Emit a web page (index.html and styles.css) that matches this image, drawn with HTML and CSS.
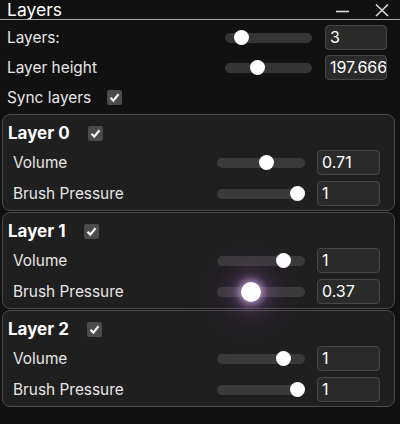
FILE: index.html
```html
<!DOCTYPE html>
<html>
<head>
<meta charset="utf-8">
<link rel="stylesheet" href="styles.css">
</head>
<body>
<div class="window">
  <div class="titlebar">
    <span class="title">Layers</span>
    <span class="tb-icons">
      <svg class="tb-min" width="16" height="16" viewBox="0 0 16 16"><path d="M1 9.5 H14" stroke="#dcdcdc" stroke-width="1.6"/></svg>
      <svg class="tb-close" width="16" height="16" viewBox="0 0 16 16"><path d="M2 2.5 L14 14 M14 2.5 L2 14" stroke="#dcdcdc" stroke-width="1.6"/></svg>
    </span>
  </div>
  <div class="global">
    <div class="row top-row">
      <span class="label">Layers:</span>
      <div class="track"><div class="thumb" style="left:19.5%"></div></div>
      <div class="input">3</div>
    </div>
    <div class="row top-row">
      <span class="label">Layer height</span>
      <div class="track"><div class="thumb" style="left:36.8%"></div></div>
      <div class="input">197.666</div>
    </div>
    <div class="row check-row">
      <span class="label">Sync layers</span>
      <span class="check"><svg width="15" height="15" viewBox="0 0 15 15"><path d="M3.5 7.8 L6.3 10.6 L11.5 4.2" fill="none" stroke="#fff" stroke-width="2.2"/></svg></span>
    </div>
  </div>
  <div class="cards">
    <div class="card">
      <div class="card-title"><span class="name">Layer 0</span><span class="check"><svg width="15" height="15" viewBox="0 0 15 15"><path d="M3.5 7.8 L6.3 10.6 L11.5 4.2" fill="none" stroke="#fff" stroke-width="2.2"/></svg></span></div>
      <div class="row card-row">
        <span class="label">Volume</span>
        <div class="track"><div class="thumb" style="left:56%"></div></div>
        <div class="input">0.71</div>
      </div>
      <div class="row card-row">
        <span class="label">Brush Pressure</span>
        <div class="track"><div class="thumb" style="left:91%"></div></div>
        <div class="input">1</div>
      </div>
    </div>
    <div class="card">
      <div class="card-title"><span class="name">Layer 1</span><span class="check"><svg width="15" height="15" viewBox="0 0 15 15"><path d="M3.5 7.8 L6.3 10.6 L11.5 4.2" fill="none" stroke="#fff" stroke-width="2.2"/></svg></span></div>
      <div class="row card-row">
        <span class="label">Volume</span>
        <div class="track"><div class="thumb" style="left:75%"></div></div>
        <div class="input">1</div>
      </div>
      <div class="row card-row">
        <span class="label">Brush Pressure</span>
        <div class="track"><div class="thumb active" style="left:39%"></div></div>
        <div class="input">0.37</div>
      </div>
    </div>
    <div class="card">
      <div class="card-title"><span class="name">Layer 2</span><span class="check"><svg width="15" height="15" viewBox="0 0 15 15"><path d="M3.5 7.8 L6.3 10.6 L11.5 4.2" fill="none" stroke="#fff" stroke-width="2.2"/></svg></span></div>
      <div class="row card-row">
        <span class="label">Volume</span>
        <div class="track"><div class="thumb" style="left:75%"></div></div>
        <div class="input">1</div>
      </div>
      <div class="row card-row">
        <span class="label">Brush Pressure</span>
        <div class="track"><div class="thumb" style="left:91%"></div></div>
        <div class="input">1</div>
      </div>
    </div>
  </div>
</div>
</body>
</html>
```

FILE: styles.css
```css
html, body {
  margin: 0;
  padding: 0;
  background: #111111;
}
body {
  width: 400px;
  height: 424px;
  overflow: hidden;
  font-family: Inter, "Liberation Sans", sans-serif;
  color: #e6e6e6;
}
.window {
  display: flex;
  flex-direction: column;
}
.titlebar {
  height: 19px;
  border-bottom: 1px solid #a8a8a8;
  display: flex;
  align-items: center;
  justify-content: space-between;
  padding: 0 10px 0 7px;
}
.title {
  font-size: 17.5px;
  color: #ffffff;
  line-height: 19px;
}
.tb-icons {
  display: flex;
  gap: 23px;
  align-items: center;
}
.tb-icons svg {
  display: block;
}
.global {
  display: flex;
  flex-direction: column;
  gap: 5px;
  padding-top: 5px;
}
.row {
  height: 25px;
  display: grid;
  align-items: center;
}
.label {
  font-size: 15.4px;
  white-space: nowrap;
}
.top-row {
  grid-template-columns: 1fr 87px 62px;
  column-gap: 13px;
  padding: 0 13px 0 7px;
}
.check-row {
  display: flex;
  padding-left: 7px;
  gap: 16px;
}
.check {
  width: 15px;
  height: 15px;
  background: #4b4b4b;
  border-radius: 2px;
  display: inline-block;
}
.check svg {
  display: block;
}
.track {
  position: relative;
  height: 10px;
  border-radius: 5px;
  background: #353535;
}
.thumb {
  position: absolute;
  top: 50%;
  width: 15px;
  height: 15px;
  margin-left: -7.5px;
  margin-top: -7.5px;
  border-radius: 50%;
  background: #ffffff;
}
.thumb.active {
  width: 20px;
  height: 20px;
  margin-left: -10px;
  margin-top: -10px;
  box-shadow: 0 0 6px 3px rgba(235, 200, 255, 0.5), 0 0 18px 8px rgba(190, 120, 220, 0.3), 0 0 40px 20px rgba(120, 60, 150, 0.16);
}
.input {
  height: 25px;
  box-sizing: border-box;
  border: 1px solid #474747;
  border-radius: 4px;
  background: #2a2a2a;
  color: #ffffff;
  font-size: 16px;
  line-height: 23px;
  padding-left: 4px;
  overflow: hidden;
  white-space: nowrap;
}
.cards {
  display: flex;
  flex-direction: column;
  gap: 1px;
  margin-top: 4px;
}
.card {
  margin: 0 5px 0 2px;
  border: 1px solid #4a4a4a;
  border-radius: 8px;
  background: #1f1f1f;
  padding: 3px 14px 4px 5px;
  display: flex;
  flex-direction: column;
  gap: 6px;
}
.card-title {
  height: 30px;
  display: flex;
  align-items: center;
  gap: 18px;
  margin-bottom: -4px;
}
.name {
  font-size: 17px;
  font-weight: 700;
  color: #ffffff;
}
.card-row {
  grid-template-columns: 1fr 88px 63px;
  column-gap: 12px;
  padding-left: 5px;
}
.card .track {
  background: #3a3a3a;
}
```
